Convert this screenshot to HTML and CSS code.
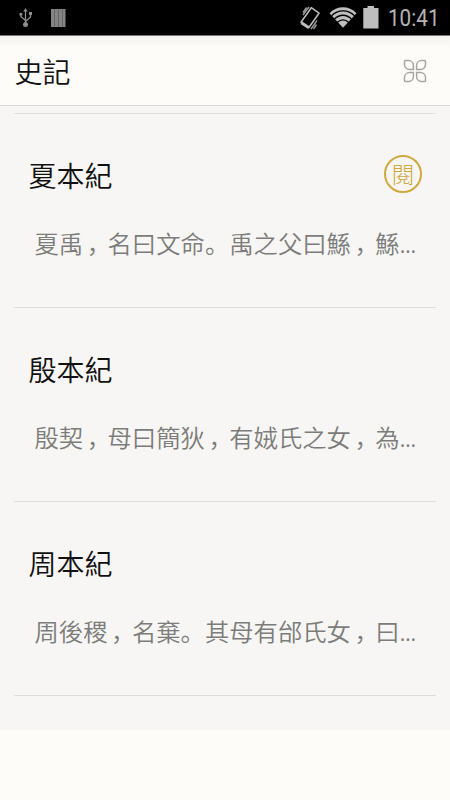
FILE: index.html
```html
<!DOCTYPE html>
<html lang="zh">
<head>
<meta charset="utf-8">
<title>史記</title>
<link rel="stylesheet" href="styles.css">
</head>
<body>
<div class="status">
  <svg class="usb" width="14" height="20" viewBox="0 0 14 20" fill="none" stroke="#8d8d8d" stroke-width="1.3"><path d="M6.500 3v13M1.800 6v2.500L6.500 12.500M11.500 6v3L6.500 13.500"/><path d="M6.500 0l2.200 3.500H4.300zM10 4h3v3h-3zM.5 5h2.800v2.500H.5z" fill="#8d8d8d" stroke="none"/><circle cx="6.500" cy="16.500" r="2.500" fill="#8d8d8d" stroke="none"/></svg>
  <svg class="bars" width="15" height="18" viewBox="0 0 15 18"><path fill="#858585" d="M0 0h14.500v18H0z"/><path d="M3.500 0v18M7.500 0v18M11.500 0v18" stroke="#606060" stroke-width=".8"/></svg>
  <svg class="vibrate" width="20" height="24" viewBox="0 0 20 24" fill="none" stroke="#bebebe"><path d="M11.300 1.700L19 7.200 8.700 21.800 1 16.300z" stroke-width="1.500" stroke-linejoin="round"/><path d="M1.500 16.800l7 4.700" stroke-width="3"/><path d="M9 1L3 9M6.500 1.500L3 6.500M17 14.500l-6 8.500M16.500 18.500l-3 4.500" stroke-width="1.400" stroke="#999"/></svg>
  <svg class="wifi" width="28" height="21" viewBox="0 0 28 21"><path d="M.5 6.200C8-1.700 20-1.700 27.500 6.200L14 20.800z" fill="#bebebe"/><path d="M2.500 8.700c6.500-6.500 16.500-6.500 23 0M5.500 12c5-5 12-5 17 0M8.500 15.300c3.300-3.300 7.700-3.300 11 0" fill="none" stroke="#000" stroke-width="1.300"/></svg>
  <svg class="battery" width="16" height="23" viewBox="0 0 16 23"><path d="M4.500 0h6.500v2H15.500V22.500H.3V2H4.500z" fill="#bebebe"/></svg>
  <span class="clock">10:41</span>
</div>
<header class="header">
  <h1>史記</h1>
  <svg width="24" height="24" viewBox="0 0 24 24" fill="none" stroke="#a5a5a3" stroke-width="1.500"><path id="petal" d="M10.400 10.400H6.500A5 5 0 0 1 1.500 5.500V2.500Q1.500 1.500 2.500 1.500H5.500A5 5 0 0 1 10.400 6.500z"/><use href="#petal" transform="matrix(-1 0 0 1 24 0)"/><use href="#petal" transform="matrix(1 0 0 -1 0 24)"/><use href="#petal" transform="matrix(-1 0 0 -1 24 24)"/></svg>
</header>
<main class="list">
  <article class="item">
    <div class="row"><h2>夏本紀</h2><span class="badge">閱</span></div>
    <p>夏禹<i>，</i>名曰文命。禹之父曰鯀<i>，</i>鯀<b>…</b></p>
  </article>
  <article class="item">
    <div class="row"><h2>殷本紀</h2></div>
    <p>殷契<i>，</i>母曰簡狄<i>，</i>有娀氏之女<i>，</i>為<b>…</b></p>
  </article>
  <article class="item">
    <div class="row"><h2>周本紀</h2></div>
    <p>周後稷<i>，</i>名棄。其母有邰氏女<i>，</i>曰<b>…</b></p>
  </article>
</main>
</body>
</html>
```

FILE: styles.css
```css
* { box-sizing: border-box; margin: 0; padding: 0; }
body {
  height: 800px;
  background: #fdfcf8;
  color: #111;
  font-family: "Noto Sans CJK SC", sans-serif;
  overflow: hidden;
}
svg { display: block; flex: none; }
.status {
  display: flex;
  align-items: flex-start;
  height: 36px;
  background: #000;
  border-bottom: 1px solid #777;
}
.usb { margin: 8px 0 0 19px; }
.bars { margin: 9px 0 0 18px; }
.vibrate { margin: 6px 0 0 auto; }
.wifi { margin: 7px 0 0 9px; }
.battery { margin: 6px 0 0 6px; }
.clock {
  width: 52px;
  margin: 0 10px 0 9px;
  font: 23.5px/37px Roboto, sans-serif;
  color: #b4b4b4;
  white-space: nowrap;
  transform: scaleX(.88);
  transform-origin: 0 0;
}
.header {
  display: flex;
  align-items: center;
  justify-content: space-between;
  height: 70px;
  padding: 0 23px 0 14.5px;
  border-bottom: 1px solid #dcdbd8;
  background: linear-gradient(#f3f2ee, #fdfcf8 12px);
}
h1, h2 { font-size: 28px; line-height: 40px; font-weight: 350; }
.list {
  height: 624px;
  padding: 7px 14px 0;
  background: #f7f6f4;
}
.item { height: 194px; padding-top: 41px; border-bottom: 1px solid #dddcda; }
.item:first-child { height: 195px; border-top: 1px solid #e0dfdd; }
.row {
  display: flex;
  justify-content: space-between;
  height: 40px;
  margin: 0 14px 0 14.5px;
}
.badge {
  width: 38px;
  height: 38px;
  border: 1.500px solid #cfa83e;
  border-width: 2px;
  border-radius: 50%;
  color: #cfa83e;
  font-size: 23px;
  font-weight: 300;
  line-height: 33px;
  text-align: center;
}
p {
  margin: 30px 0 0 20.5px;
  font-size: 24.35px;
  line-height: 36px;
  font-weight: 350;
  color: #7c7c7a;
  white-space: nowrap;
}
p i {
  display: inline-block;
  width: 1em;
  padding-left: 6px;
  text-indent: -2.5px;
  font-style: normal;
  font-feature-settings: "halt";
}
p b { font-family: "Open Sans", sans-serif; font-size: 21px; font-weight: 400; }
```
